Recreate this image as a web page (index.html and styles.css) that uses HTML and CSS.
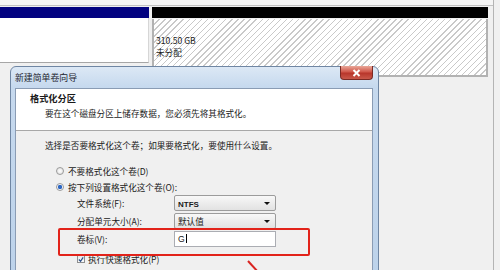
FILE: index.html
```html
<!DOCTYPE html>
<html lang="zh-CN">
<head>
<meta charset="UTF-8">
<title>新建简单卷向导</title>
<link rel="stylesheet" href="styles.css">
</head>
<body>
<div class="console">
    <div class="top-strip"></div>
    <div class="volumes">
        <div class="vol vol-primary">
            <div class="vol-bar"></div>
            <div class="vol-body"></div>
        </div>
        <div class="vol vol-free">
            <div class="vol-bar"></div>
            <div class="vol-body">
                <p>310.50 GB</p>
                <p>未分配</p>
            </div>
        </div>
    </div>
</div>

<div class="dialog">
    <div class="titlebar">新建简单卷向导</div>
    <button class="btn-close">
        <svg width="9" height="8" viewBox="0 0 9 8"><path d="M1.5 1 L7.5 7 M7.5 1 L1.5 7" stroke="#fff" stroke-width="2"/></svg>
    </button>
    <div class="client">
        <div class="head">
            <h2>格式化分区</h2>
            <p>要在这个磁盘分区上储存数据，您必须先将其格式化。</p>
        </div>
        <div class="body">
            <p class="intro">选择是否要格式化这个卷；如果要格式化，要使用什么设置。</p>
            <div class="row radio-row first"><span class="radio"></span>不要格式化这个卷(D)</div>
            <div class="row radio-row"><span class="radio on"></span>按下列设置格式化这个卷(O):</div>
            <div class="row sub fs">
                <span class="label">文件系统(F):</span>
                <span class="select"><b>NTFS</b><i class="caret"></i></span>
            </div>
            <div class="row sub alloc">
                <span class="label">分配单元大小(A):</span>
                <span class="select">默认值<i class="caret"></i></span>
            </div>
            <div class="row sub vol-label">
                <span class="label">卷标(V):</span>
                <span class="textbox">G<i class="cursor"></i></span>
            </div>
            <div class="row sub check-row">
                <span class="check"><svg width="7" height="7" viewBox="0 0 7 7"><path d="M1 3.5 L3 5.5 L6 1" stroke="#2b4f8a" stroke-width="1.4" fill="none"/></svg></span>执行快速格式化(P)
            </div>
            <div class="row sub check-row next"><span class="check"></span>启用文件和文件夹压缩(E)</div>
        </div>
    </div>
</div>

<svg class="arrow" width="20" height="20" viewBox="0 0 20 20"><path d="M1 1 L12 13" stroke="#d92420" stroke-width="2"/></svg>
</body>
</html>
```

FILE: styles.css
```css
* {box-sizing: border-box; margin: 0; padding: 0;}
body {position: relative; width: 500px; height: 270px; overflow: hidden; background: #f0f0f0; font-family: "Noto Sans CJK SC", "Liberation Sans", sans-serif; font-size: 8.6px; color: #1a1a1a;}

/* disk management behind the wizard */
.console {width: 494px; height: 270px; border-right: 1px solid #b4b4b4;}
.top-strip {height: 6px; background: #f5f5f5; border-bottom: 1px solid #c2c2c2;}
.volumes {display: flex; gap: 3px; margin-top: 1px;}
.vol-bar {height: 11px;}
.vol-primary {width: 149px;}
.vol-primary .vol-bar {background: #020280;}
.vol-primary .vol-body {height: 45px; background: #fff; border-bottom: 1px solid #a6a6a6; border-right: 1px solid #d6d6d6;}
.vol-free {width: 336px;}
.vol-free .vol-bar {background: #000;}
.vol-free .vol-body {height: 58px; margin-top: 1px; padding: 15px 0 0 2px; border: 2px solid #b2b2b2; border-top: 0; background: repeating-linear-gradient(135deg, #fff 0 3.3px, #c9c9c9 3.3px 4.3px); line-height: 12px;}

/* wizard window */
.dialog {position: absolute; left: 10px; top: 66px; width: 369px; height: 230px; padding: 0 5px 0 4px; border: 1px solid #6f86a3; border-radius: 6px 6px 0 0; background: linear-gradient(#dce8f5, #c6d9ee 20px, #bcd2ea);}
.titlebar {height: 21px; line-height: 21px; font-size: 8.9px; color: #1e2630;}
.btn-close {position: absolute; top: -1px; right: 5px; width: 33px; height: 14px; border: 1px solid #7a2a24; border-top: 0; border-radius: 0 0 4px 4px; background: linear-gradient(#eaa899, #d0574a 45%, #b8362b 55%, #c9584a); display: flex; align-items: center; justify-content: center;}
.client {height: 210px; border: 1px solid #8a9cb4; background: #f0f0f0;}
.head {height: 42px; padding: 3px 0 0 14px; background: #fff; border-bottom: 1px solid #a8a8a8;}
.head h2 {font-size: 9.2px; line-height: 12px; font-weight: bold;}
.head p {margin-top: 3px; padding-left: 15px; line-height: 12px;}

.body {padding: 9px 0 0 29px;}
.intro {line-height: 11px;}
.row {display: flex; align-items: center; white-space: nowrap;}
.radio-row {height: 14px; margin-top: 2px; padding-left: 11px;}
.radio-row.first {margin-top: 13px;}
.radio {width: 8px; height: 8px; margin-right: 4px; border: 1px solid #9a9a9a; border-radius: 50%; background: radial-gradient(#fff, #dcdcdc);}
.radio.on {background: radial-gradient(circle, #2e67c2 0 2px, #f3f6fb 2.3px);}

.sub {height: 16px; margin-top: 2px; padding-left: 32px;}
.sub.fs {margin-top: 1px;}
.label {width: 97px;}
.select {position: relative; width: 102px; height: 16px; padding-left: 3px; line-height: 15px; border: 1px solid #9c9c9c; border-radius: 2px; background: linear-gradient(#f8f8f8, #e2e2e2);}
.select b {font-family: "Liberation Sans", sans-serif; font-size: 8px;}
.caret {position: absolute; right: 5px; top: 6px; border: 3px solid transparent; border-top: 3px solid #111;}
.textbox {width: 102px; height: 16px; padding-left: 3px; line-height: 15px; border: 1px solid #abadb3; background: #fff; font-family: "Liberation Sans", sans-serif;}
.cursor {display: inline-block; width: 1px; height: 9px; margin-left: 1px; vertical-align: -1px; background: #000;}
.vol-label {position: relative;}
.vol-label::after {content: ""; position: absolute; left: 13px; top: -3px; width: 248px; height: 24px; border: 2px solid #e2231a; border-radius: 2px;}

.check-row {height: 14px; margin-top: 5px;}
.check-row.next {margin-top: 1px;}
.check {display: flex; align-items: center; justify-content: center; width: 8px; height: 8px; margin-right: 3px; border: 1px solid #8e8f8f; background: linear-gradient(#e8e8e8, #fafafa);}

.arrow {position: absolute; left: 247px; top: 260px;}
```
